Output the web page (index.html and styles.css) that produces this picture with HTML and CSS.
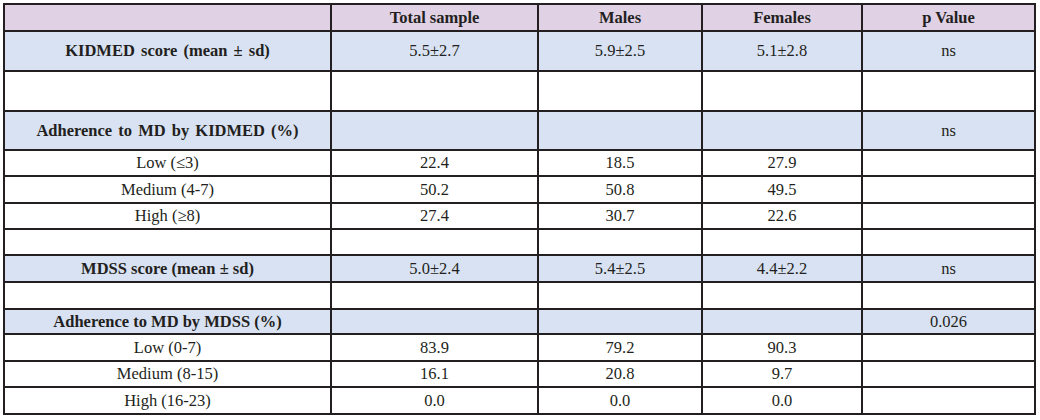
FILE: index.html
```html
<!DOCTYPE html>
<html lang="en">
<head>
<meta charset="utf-8">
<title>KIDMED and MDSS adherence</title>
<link rel="stylesheet" href="styles.css">
</head>
<body>
<table class="data">
  <colgroup>
    <col class="c-label">
    <col class="c-total">
    <col class="c-males">
    <col class="c-females">
    <col class="c-p">
  </colgroup>
  <thead>
    <tr class="head r27">
      <th></th>
      <th>Total sample</th>
      <th>Males</th>
      <th>Females</th>
      <th>p Value</th>
    </tr>
  </thead>
  <tbody>
    <tr class="shade r40">
      <th class="lbl spaced">KIDMED score (mean ± sd)</th>
      <td>5.5±2.7</td><td>5.9±2.5</td><td>5.1±2.8</td><td>ns</td>
    </tr>
    <tr class="r40"><td></td><td></td><td></td><td></td><td></td></tr>
    <tr class="shade r39">
      <th class="lbl spaced">Adherence to MD by KIDMED (%)</th>
      <td></td><td></td><td></td><td>ns</td>
    </tr>
    <tr class="r26">
      <td>Low (≤3)</td><td>22.4</td><td>18.5</td><td>27.9</td><td></td>
    </tr>
    <tr class="r27">
      <td>Medium (4-7)</td><td>50.2</td><td>50.8</td><td>49.5</td><td></td>
    </tr>
    <tr class="r26">
      <td>High (≥8)</td><td>27.4</td><td>30.7</td><td>22.6</td><td></td>
    </tr>
    <tr class="r26"><td></td><td></td><td></td><td></td><td></td></tr>
    <tr class="shade r27">
      <th class="lbl">MDSS score (mean ± sd)</th>
      <td>5.0±2.4</td><td>5.4±2.5</td><td>4.4±2.2</td><td>ns</td>
    </tr>
    <tr class="r27"><td></td><td></td><td></td><td></td><td></td></tr>
    <tr class="shade r25">
      <th class="lbl">Adherence to MD by MDSS (%)</th>
      <td></td><td></td><td></td><td>0.026</td>
    </tr>
    <tr class="r27">
      <td>Low (0-7)</td><td>83.9</td><td>79.2</td><td>90.3</td><td></td>
    </tr>
    <tr class="r26">
      <td>Medium (8-15)</td><td>16.1</td><td>20.8</td><td>9.7</td><td></td>
    </tr>
    <tr class="r27">
      <td>High (16-23)</td><td>0.0</td><td>0.0</td><td>0.0</td><td></td>
    </tr>
  </tbody>
</table>
</body>
</html>
```

FILE: styles.css
```css
html, body {
  margin: 0;
  padding: 0;
  background: #ffffff;
}

body {
  padding: 3px 0 0 3px;
  font-family: "Liberation Serif", "DejaVu Serif", serif;
  font-size: 16.5px;
  color: #231f20;
}

.data {
  border-collapse: collapse;
  table-layout: fixed;
  width: 1032px;
}

.c-label { width: 327px; }
.c-total { width: 207px; }
.c-males { width: 164px; }
.c-females { width: 160px; }
.c-p { width: 173px; }

.data th,
.data td {
  border: 2px solid #231f20;
  padding: 0 4px;
  text-align: center;
  vertical-align: middle;
  line-height: 18px;
  font-weight: normal;
}

.data th {
  font-weight: bold;
}

.head th {
  background: #e0d1e5;
}

.shade th,
.shade td {
  background: #d9e2f3;
}

.spaced {
  word-spacing: 2px;
}

.r25 { height: 25px; }
.r26 { height: 26px; }
.r27 { height: 27px; }
.r39 { height: 39px; }
.r40 { height: 40px; }
```
